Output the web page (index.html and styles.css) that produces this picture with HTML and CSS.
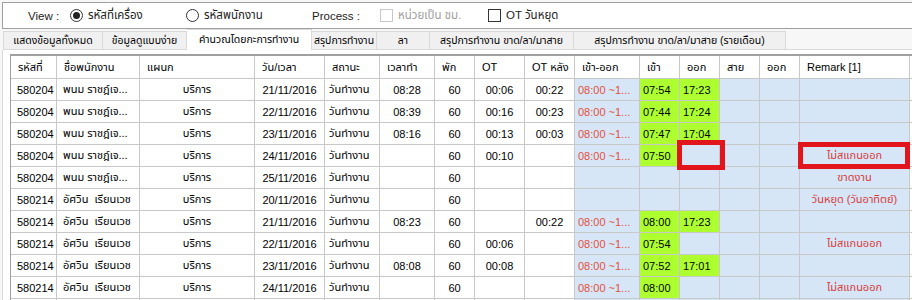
FILE: index.html
```html
<!DOCTYPE html>
<html>
<head>
    <meta charset="utf-8">
    <link rel="stylesheet" href="styles.css">
</head>
<body>
    <div class="app">
        <!-- แถบเลือกมุมมอง -->
        <div class="view-bar">
            <span class="view-label">View :</span>
            <label class="opt opt-machine"><span class="radio checked"></span>รหัสที่เครื่อง</label>
            <label class="opt opt-emp"><span class="radio"></span>รหัสพนักงาน</label>
            <span class="process-label">Process :</span>
            <label class="opt opt-hour disabled"><span class="check"></span>หน่วยเป็น ชม.</label>
            <label class="opt"><span class="check"></span>OT วันหยุด</label>
        </div>

        <!-- แท็บ -->
        <div class="tabs">
            <div class="tab t1">แสดงข้อมูลทั้งหมด</div>
            <div class="tab t2">ข้อมูลดูแบบง่าย</div>
            <div class="tab t3 active">คำนวณโดยกะการทำงาน</div>
            <div class="tab t4">สรุปการทำงาน</div>
            <div class="tab t5">ลา</div>
            <div class="tab t6">สรุปการทำงาน ขาด/ลา/มาสาย</div>
            <div class="tab t7">สรุปการทำงาน ขาด/ลา/มาสาย (รายเดือน)</div>
        </div>

        <!-- ตารางข้อมูล -->
        <div class="tab-page">
            <div class="grid-wrap">
                <table class="grid">
                    <thead>
                        <tr>
                            <th class="w-id">รหัสที่</th>
                            <th class="w-name">ชื่อพนักงาน</th>
                            <th class="w-dept">แผนก</th>
                            <th class="w-date">วัน/เวลา</th>
                            <th class="w-status">สถานะ</th>
                            <th class="w-work">เวลาทำ</th>
                            <th class="w-break">พัก</th>
                            <th class="w-ot">OT</th>
                            <th class="w-ot">OT หลัง</th>
                            <th class="w-shift">เข้า-ออก</th>
                            <th class="w-time">เข้า</th>
                            <th class="w-time">ออก</th>
                            <th class="w-time">สาย</th>
                            <th class="w-time">ออก</th>
                            <th class="w-remark">Remark [1]</th>
                            <th class="w-extra"></th>
                        </tr>
                    </thead>
                    <tbody>
                        <tr>
                            <td>580204</td><td>พนม ราชฎ์เจ...</td><td class="c">บริการ</td><td class="c">21/11/2016</td><td class="s">วันทำงาน</td>
                            <td class="c">08:28</td><td class="c">60</td><td class="c">00:06</td><td class="c">00:22</td>
                            <td class="b shift">08:00 ~1...</td><td class="g">07:54</td><td class="g">17:23</td><td class="b"></td><td class="b"></td><td class="b"></td><td></td>
                        </tr>
                        <tr>
                            <td>580204</td><td>พนม ราชฎ์เจ...</td><td class="c">บริการ</td><td class="c">22/11/2016</td><td class="s">วันทำงาน</td>
                            <td class="c">08:39</td><td class="c">60</td><td class="c">00:16</td><td class="c">00:23</td>
                            <td class="b shift">08:00 ~1...</td><td class="g">07:44</td><td class="g">17:24</td><td class="b"></td><td class="b"></td><td class="b"></td><td></td>
                        </tr>
                        <tr>
                            <td>580204</td><td>พนม ราชฎ์เจ...</td><td class="c">บริการ</td><td class="c">23/11/2016</td><td class="s">วันทำงาน</td>
                            <td class="c">08:16</td><td class="c">60</td><td class="c">00:13</td><td class="c">00:03</td>
                            <td class="b shift">08:00 ~1...</td><td class="g">07:47</td><td class="g">17:04</td><td class="b"></td><td class="b"></td><td class="b"></td><td></td>
                        </tr>
                        <tr>
                            <td>580204</td><td>พนม ราชฎ์เจ...</td><td class="c">บริการ</td><td class="c">24/11/2016</td><td class="s">วันทำงาน</td>
                            <td class="c"></td><td class="c">60</td><td class="c">00:10</td><td class="c"></td>
                            <td class="b shift">08:00 ~1...</td><td class="g">07:50</td><td class="b"></td><td class="b"></td><td class="b"></td><td class="b remark">ไม่สแกนออก</td><td></td>
                        </tr>
                        <tr>
                            <td>580204</td><td>พนม ราชฎ์เจ...</td><td class="c">บริการ</td><td class="c">25/11/2016</td><td class="s">วันทำงาน</td>
                            <td class="c"></td><td class="c">60</td><td class="c"></td><td class="c"></td>
                            <td class="b"></td><td class="b"></td><td class="b"></td><td class="b"></td><td class="b"></td><td class="b remark">ขาดงาน</td><td></td>
                        </tr>
                        <tr>
                            <td>580214</td><td>อัศวิน&nbsp; เรียนเวช</td><td class="c">บริการ</td><td class="c">20/11/2016</td><td class="s">วันทำงาน</td>
                            <td class="c"></td><td class="c">60</td><td class="c"></td><td class="c"></td>
                            <td class="b"></td><td class="b"></td><td class="b"></td><td class="b"></td><td class="b"></td><td class="b remark">วันหยุด (วันอาทิตย์)</td><td></td>
                        </tr>
                        <tr>
                            <td>580214</td><td>อัศวิน&nbsp; เรียนเวช</td><td class="c">บริการ</td><td class="c">21/11/2016</td><td class="s">วันทำงาน</td>
                            <td class="c">08:23</td><td class="c">60</td><td class="c"></td><td class="c">00:22</td>
                            <td class="b shift">08:00 ~1...</td><td class="g">08:00</td><td class="g">17:23</td><td class="b"></td><td class="b"></td><td class="b"></td><td></td>
                        </tr>
                        <tr>
                            <td>580214</td><td>อัศวิน&nbsp; เรียนเวช</td><td class="c">บริการ</td><td class="c">22/11/2016</td><td class="s">วันทำงาน</td>
                            <td class="c"></td><td class="c">60</td><td class="c">00:06</td><td class="c"></td>
                            <td class="b shift">08:00 ~1...</td><td class="g">07:54</td><td class="b"></td><td class="b"></td><td class="b"></td><td class="b remark">ไม่สแกนออก</td><td></td>
                        </tr>
                        <tr>
                            <td>580214</td><td>อัศวิน&nbsp; เรียนเวช</td><td class="c">บริการ</td><td class="c">23/11/2016</td><td class="s">วันทำงาน</td>
                            <td class="c">08:08</td><td class="c">60</td><td class="c">00:08</td><td class="c"></td>
                            <td class="b shift">08:00 ~1...</td><td class="g">07:52</td><td class="g">17:01</td><td class="b"></td><td class="b"></td><td class="b"></td><td></td>
                        </tr>
                        <tr>
                            <td>580214</td><td>อัศวิน&nbsp; เรียนเวช</td><td class="c">บริการ</td><td class="c">24/11/2016</td><td class="s">วันทำงาน</td>
                            <td class="c"></td><td class="c">60</td><td class="c"></td><td class="c"></td>
                            <td class="b shift">08:00 ~1...</td><td class="g">08:00</td><td class="b"></td><td class="b"></td><td class="b"></td><td class="b remark">ไม่สแกนออก</td><td></td>
                        </tr>
                        <tr>
                            <td></td><td></td><td></td><td></td><td></td>
                            <td></td><td></td><td></td><td></td>
                            <td class="b"></td><td class="b"></td><td class="b"></td><td class="b"></td><td class="b"></td><td class="b"></td><td></td>
                        </tr>
                    </tbody>
                </table>

                <!-- กรอบแดงที่ทำเครื่องหมายไว้ -->
                <div class="mark mark-out"></div>
                <div class="mark mark-remark"></div>
            </div>
        </div>
    </div>
</body>
</html>
```

FILE: styles.css
```css
* {
    margin: 0;
    padding: 0;
    box-sizing: border-box;
}

body {
    font-family: "Liberation Sans", "Noto Sans Thai", "Loma", "Garuda", "Tlwg Typo", sans-serif;
    font-size: 11px;
    color: #000;
    background: #f7f7f7;
    overflow: hidden;
    height: 300px;
}

.app {
    padding-top: 2px;
    padding-left: 2px;
}

/* แถบด้านบน */
.view-bar {
    display: flex;
    align-items: center;
    height: 27px;
    width: 930px;
    background: #fff;
    border: 1px solid #a0a0a0;
    padding-left: 25px;
    font-size: 11.5px;
    color: #222;
}

.view-label {
    width: 42px;
}

.process-label {
    width: 68px;
}

.opt {
    display: flex;
    align-items: center;
    gap: 5px;
}

.opt-machine {
    width: 116px;
}

.opt-emp {
    width: 126px;
}

.opt-hour {
    width: 108px;
}

.opt.disabled {
    color: #a0a0a0;
}

.radio {
    width: 13px;
    height: 13px;
    border: 1px solid #333;
    border-radius: 50%;
    display: flex;
    align-items: center;
    justify-content: center;
    background: #fff;
}

.radio.checked::after {
    content: "";
    width: 7px;
    height: 7px;
    border-radius: 50%;
    background: #222;
}

.check {
    width: 13px;
    height: 13px;
    border: 1px solid #333;
    background: #fff;
}

.disabled .check {
    border-color: #c8c8c8;
}

/* แท็บ */
.tabs {
    display: flex;
    align-items: flex-end;
    height: 20px;
    margin-top: 1px;
    margin-left: 1px;
    border-bottom: 1px solid #d9d9d9;
    font-size: 10.5px;
}

.tab {
    height: 18px;
    border: 1px solid #d9d9d9;
    border-bottom: none;
    border-left: none;
    background: #f0f0f0;
    text-align: center;
    line-height: 16px;
    white-space: nowrap;
    overflow: hidden;
}

.tab.t1 {
    border-left: 1px solid #d9d9d9;
}

.tab.active {
    height: 21px;
    margin-bottom: -1px;
    background: #fff;
    line-height: 18px;
}

.t1 { width: 100px; }
.t2 { width: 84px; }
.t3 { width: 125px; }
.t4 { width: 65px; }
.t5 { width: 53px; }
.t6 { width: 144px; }
.t7 { width: 212px; }

/* หน้าแท็บ */
.tab-page {
    background: #fff;
    border-left: 1px solid #d9d9d9;
    height: 260px;
    padding: 4px 0 0 7px;
    overflow: hidden;
}

.grid-wrap {
    position: relative;
    width: 980px;
}

.grid {
    border-collapse: separate;
    border-spacing: 0;
    table-layout: fixed;
    width: 980px;
    border-top: 2px solid #a0a0a0;
    border-left: 1px solid #a0a0a0;
}

.grid th,
.grid td {
    border-right: 1px solid #c8c8c8;
    border-bottom: 1px solid #c8c8c8;
    white-space: nowrap;
    overflow: hidden;
}

.grid th {
    height: 23px;
    font-weight: normal;
    text-align: left;
    padding-left: 7px;
    background: #fff;
}

.grid td {
    height: 22px;
    padding-left: 6px;
}

.w-id { width: 46px; }
.w-name { width: 83px; }
.w-dept { width: 115px; }
.w-date { width: 70px; }
.w-status { width: 55px; }
.w-work { width: 55px; }
.w-break { width: 40px; }
.w-ot { width: 50px; }
.w-shift { width: 65px; }
.w-time { width: 40px; }
.w-remark { width: 110px; }
.w-extra { width: 80px; }

.grid td.c {
    text-align: center;
    padding-left: 0;
}

.grid td.s {
    padding-left: 4px;
}

.grid td.b {
    background: #d6e6f7;
    padding-left: 3px;
}

.grid td.g {
    background: #adff2f;
    padding-left: 3px;
}

.grid td.shift {
    color: #e2503c;
}

.grid td.remark {
    color: #d63a3a;
    text-align: center;
    padding-left: 0;
}

/* กรอบแดง */
.mark {
    position: absolute;
    border: 5px solid #e2141c;
}

.mark-out {
    left: 667px;
    top: 86px;
    width: 48px;
    height: 30px;
}

.mark-remark {
    left: 788px;
    top: 88px;
    width: 112px;
    height: 27px;
}
```
